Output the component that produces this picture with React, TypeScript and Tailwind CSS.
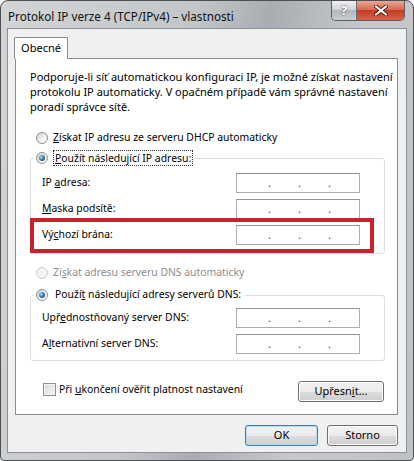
import React from 'react';
import clsx from 'clsx';

const Radio: React.FC<{ checked?: boolean; disabled?: boolean }> = ({ checked, disabled }) => (
  <span
    className={clsx(
      'flex h-[12px] w-[12px] shrink-0 items-center justify-center rounded-full border',
      disabled
        ? 'border-[#cbcbcb] bg-[#f4f4f4]'
        : 'border-[#8e8f8f] bg-[linear-gradient(135deg,#cfd1d3,#f3f3f3_60%,#ffffff)]'
    )}
  >
    {checked && (
      <span className="h-[6px] w-[6px] rounded-full bg-[radial-gradient(circle_at_35%_35%,#a9dcf7,#2c6ea9_55%,#0e2f55)]" />
    )}
  </span>
);

const IpBox: React.FC = () => (
  <div className="flex h-[20px] w-[124px] shrink-0 items-end border border-[#abadb3] border-t-[#8f9298] bg-white pb-[4px] pl-[31px] text-[11px] leading-none text-[#444]">
    <span className="w-[30px]">.</span>
    <span className="w-[30px]">.</span>
    <span>.</span>
  </div>
);

const Row: React.FC<{ children: React.ReactNode; marked?: boolean; className?: string }> = ({ children, marked, className }) => (
  <div className={clsx('relative flex items-center pl-[11px] pr-[24px]', className)}>
    <span className="flex-1">{children}</span>
    <IpBox />
    {marked && (
      <span className="absolute -bottom-[8px] -left-[1px] -top-[7px] right-[10px] border-[4px] border-[#c8232c]" />
    )}
  </div>
);

const WinButton: React.FC<{ children: React.ReactNode; primary?: boolean; className?: string }> = ({ children, primary, className }) => (
  <button
    className={clsx(
      'h-[21px] rounded-[3px] border text-[11px] text-black bg-[linear-gradient(#f2f2f2,#ebebeb_50%,#dddddd_51%,#cfcfcf)]',
      primary ? 'border-[#3c7fb1] shadow-[inset_0_0_0_1px_#b4dcf5]' : 'border-[#707070] shadow-[inset_0_0_0_1px_#fbfbfb]',
      className
    )}
  >
    {children}
  </button>
);

export default function App() {
  return (
    <div className="h-[461px] w-[414px] overflow-hidden rounded-t-[8px] rounded-b-[4px] border border-[#4d4f52] bg-[linear-gradient(100deg,#d2d4d6,#c3c6c9_40%,#a9adb1_55%,#c6c9cc_75%,#bfc2c5)] font-['Noto_Sans',sans-serif] text-[10.4px] text-black">
      {/* Title bar */}
      <div className="flex h-[28px] items-start justify-between">
        <div className="pl-[7px] pt-[7px] text-[11.7px] leading-[16px] text-[#111]">
          Protokol IP verze 4 (TCP/IPv4) – vlastnosti
        </div>
        <div className="mr-[8px] flex h-[20px] overflow-hidden rounded-b-[5px] border border-t-0 border-[#5b5e62]">
          <div className="flex w-[25px] items-center justify-center border-r border-[#6b6e72] bg-[linear-gradient(#eceef0,#d3d6d9_45%,#b3b7bb_50%,#c9ccd0)] text-[13px] font-bold leading-none text-white [text-shadow:0_0_2px_#333]">
            ?
          </div>
          <div className="flex w-[47px] items-center justify-center bg-[linear-gradient(#e9a797,#d86a55_45%,#c53b24_50%,#d4624a)]">
            <svg width="14" height="11" viewBox="0 0 14 11">
              <path d="M2 1.5 L12 9.5 M12 1.5 L2 9.5" stroke="#5a1a10" strokeWidth="4" strokeLinecap="round" />
              <path d="M2 1.5 L12 9.5 M12 1.5 L2 9.5" stroke="#ffffff" strokeWidth="2.2" strokeLinecap="round" />
            </svg>
          </div>
        </div>
      </div>

      {/* Client area */}
      <div className="mx-[7px] flex h-[423px] w-[398px] flex-col bg-[#f0f0f0] pt-[8px] shadow-[0_0_0_1px_#8d9094]">
        <div className="relative z-10 ml-[6px] flex h-[22px] w-[54px] items-center justify-center rounded-t-[2px] border border-b-0 border-[#898c95] bg-white pb-[1px] text-[11px]">
          Obecné
        </div>
        <div className="-mt-[1px] ml-[7px] flex h-[357px] w-[383px] flex-col border border-[#898c95] bg-white">
          <p className="pl-[14px] pt-[10px] text-[11px] leading-[15px]">
            Podporuje-li síť automatickou konfiguraci IP, je možné získat nastavení
            <br />
            protokolu IP automaticky. V opačném případě vám správné nastavení
            <br />
            poradí správce sítě.
          </p>

          <div className="mt-[14px] flex h-[20px] items-center gap-[5px] pl-[20px]">
            <Radio />
            <span>
              <span className="underline">Z</span>ískat IP adresu ze serveru DHCP automaticky
            </span>
          </div>

          <fieldset className="ml-[14px] mr-[12px] rounded-[3px] border border-[#d5dfe5] pb-[8px]">
            <legend className="ml-[3px] flex h-[20px] items-center gap-[5px] px-[2px]">
              <Radio checked />
              <span className="border border-dotted border-[#333] px-[1px] leading-[14px]">
                <span className="underline">P</span>oužít následující IP adresu:
              </span>
            </legend>
            <div className="mt-[5px] flex flex-col gap-[6px]">
              <Row>
                IP <span className="underline">a</span>dresa:
              </Row>
              <Row>
                <span className="underline">M</span>aska podsítě:
              </Row>
              <Row marked>
                Vý<span className="underline">c</span>hozí brána:
              </Row>
            </div>
          </fieldset>

          <div className="mt-[9px] flex h-[20px] items-center gap-[5px] pl-[20px] text-[#8d8d8d]">
            <Radio disabled />
            <span>
              Zí<span className="underline">s</span>kat adresu serveru DNS automaticky
            </span>
          </div>

          <fieldset className="ml-[14px] mr-[12px] mt-[2px] rounded-[3px] border border-[#d5dfe5] pb-[6px]">
            <legend className="ml-[3px] flex h-[20px] items-center gap-[5px] px-[2px]">
              <Radio checked />
              <span className="px-[2px]">
                Použí<span className="underline">t</span> následující adresy serverů DNS:
              </span>
            </legend>
            <div className="mt-[3px] flex flex-col gap-[6px]">
              <Row>
                Upř<span className="underline">e</span>dnostňovaný server DNS:
              </Row>
              <Row>
                A<span className="underline">l</span>ternativní server DNS:
              </Row>
            </div>
          </fieldset>

          <div className="mt-[20px] flex items-start justify-between pl-[27px] pr-[13px]">
            <div className="flex items-center gap-[3px] pt-[1px]">
              <span className="h-[13px] w-[13px] border border-[#8f8f8f] bg-[linear-gradient(135deg,#d6d8db,#f7f7f7)] shadow-[inset_0_0_0_1px_#f2f2f2]" />
              <span>
                Při <span className="underline">u</span>končení ověřit platnost nastavení
              </span>
            </div>
            <WinButton className="w-[86px]">
              Upřesn<span className="underline">i</span>t...
            </WinButton>
          </div>
        </div>

        <div className="mt-[10px] flex justify-end gap-[9px] pr-[8px]">
          <WinButton primary className="w-[73px]">
            OK
          </WinButton>
          <WinButton className="w-[71px]">Storno</WinButton>
        </div>
      </div>
    </div>
  );
}
